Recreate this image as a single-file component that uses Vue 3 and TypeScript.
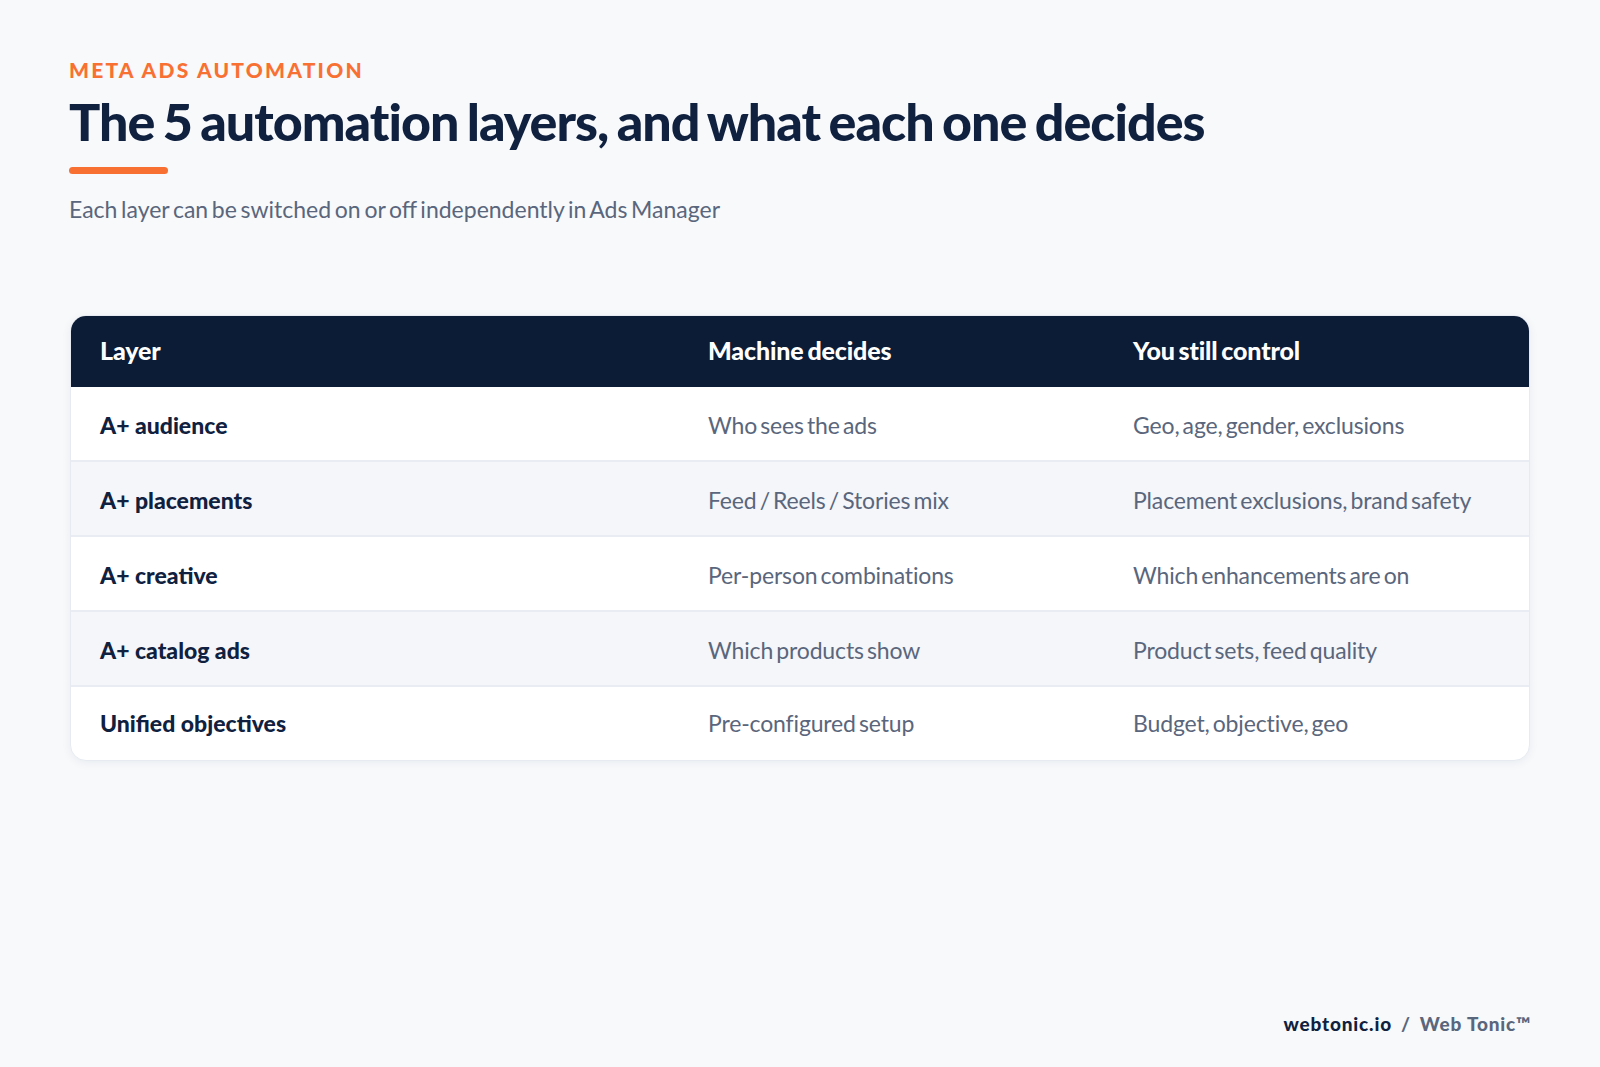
<script setup lang="ts">
interface Row {
  layer: string
  machine: string
  control: string
}

const rows: Row[] = [
  { layer: 'A+ audience', machine: 'Who sees the ads', control: 'Geo, age, gender, exclusions' },
  { layer: 'A+ placements', machine: 'Feed / Reels / Stories mix', control: 'Placement exclusions, brand safety' },
  { layer: 'A+ creative', machine: 'Per-person combinations', control: 'Which enhancements are on' },
  { layer: 'A+ catalog ads', machine: 'Which products show', control: 'Product sets, feed quality' },
  { layer: 'Unified objectives', machine: 'Pre-configured setup', control: 'Budget, objective, geo' },
]
</script>

<template>
  <div class="slide">
    <header class="head">
      <p class="eyebrow">META ADS AUTOMATION</p>
      <h1 class="title">The 5 automation layers, and what each one decides</h1>
      <div class="rule"></div>
      <p class="sub">Each layer can be switched on or off independently in Ads Manager</p>
    </header>

    <div class="card">
      <div class="row row--head">
        <div>Layer</div>
        <div>Machine decides</div>
        <div>You still control</div>
      </div>
      <div v-for="row in rows" :key="row.layer" class="row">
        <div class="layer">{{ row.layer }}</div>
        <div>{{ row.machine }}</div>
        <div>{{ row.control }}</div>
      </div>
    </div>

    <footer class="foot">
      <span class="foot__site">webtonic.io</span>
      <span class="foot__sep">/</span>
      <span class="foot__brand">Web Tonic™</span>
    </footer>
  </div>
</template>

<style scoped>
.slide {
  box-sizing: border-box;
  height: 1067px;
  padding: 57px 70px 0 69px;
  display: flex;
  flex-direction: column;
  background: #f7f9fb;
  font-family: Lato, "Open Sans", sans-serif;
  overflow: hidden;
}

.eyebrow {
  margin: 0;
  font-size: 21px;
  line-height: 26px;
  font-weight: 900;
  letter-spacing: 0.105em;
  color: #f97033;
}

.title {
  margin: 6px 0 0;
  font-size: 52px;
  line-height: 64px;
  font-weight: 900;
  letter-spacing: -1px;
  word-spacing: -3px;
  color: #10213f;
}

.rule {
  width: 99px;
  height: 7px;
  margin-top: 14px;
  border-radius: 4px;
  background: #f97033;
}

.sub {
  margin: 20px 0 0;
  font-size: 23px;
  line-height: 30px;
  word-spacing: -2.2px;
  color: #5a667c;
}

.card {
  margin: 91px 0 0 1px;
  border: 1px solid #e7ebf1;
  border-radius: 16px;
  overflow: hidden;
  background: #fff;
  box-shadow: 0 2px 10px rgba(16, 33, 63, 0.06);
}

.row {
  display: grid;
  grid-template-columns: 608px 425px 1fr;
  align-items: center;
  height: 75px;
  padding-left: 29px;
  padding-top: 2px;
  font-size: 23px;
  letter-spacing: -0.15px;
  word-spacing: -2.6px;
  color: #5a667c;
  border-bottom: 2px solid #e9ecf2;
  box-sizing: border-box;
}

.row:nth-child(odd) {
  background: #f4f6fa;
}

.row:last-child {
  height: 73px;
  padding-top: 0;
  padding-bottom: 1px;
  border-bottom: 0;
}

.row--head,
.row--head:nth-child(odd) {
  height: 71px;
  padding-top: 0;
  padding-bottom: 3px;
  background: #0c1c36;
  color: #fff;
  font-size: 25px;
  font-weight: 900;
  word-spacing: -2px;
  border-bottom: 0;
}

.layer {
  font-weight: 900;
  letter-spacing: 0;
  word-spacing: 0;
  color: #10213f;
}

.foot {
  margin-top: auto;
  margin-right: -1px;
  margin-bottom: 30px;
  display: flex;
  justify-content: flex-end;
  gap: 9px;
  font-size: 19px;
  line-height: 26px;
  font-weight: 900;
  letter-spacing: 0.043em;
}

.foot__site {
  color: #10213f;
}

.foot__sep,
.foot__brand {
  color: #5a667c;
}
</style>

<style>
html,
body {
  background: #f7f9fb;
}
</style>
